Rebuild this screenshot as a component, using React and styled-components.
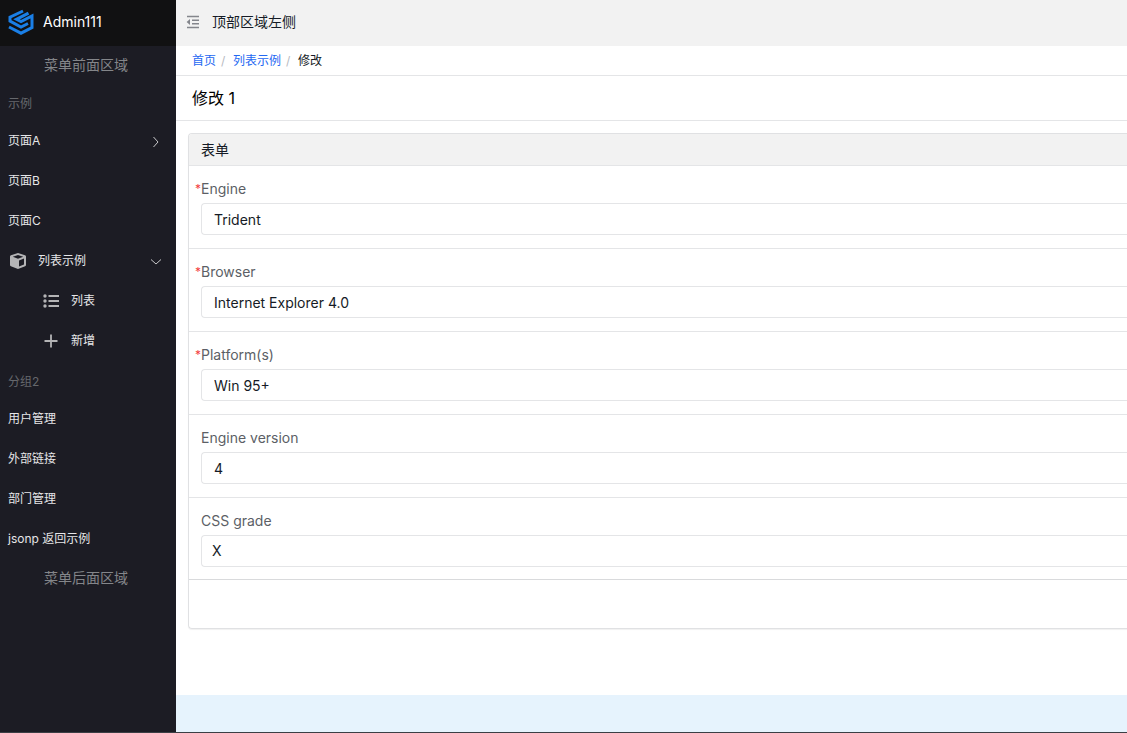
import React from "react";
import styled, { createGlobalStyle } from "styled-components";

const GlobalStyle = createGlobalStyle`
    * {
        box-sizing: border-box;
    }

    body {
        margin: 0;
        background: #fff;
        color: #151b26;
        font-family: Inter, "Noto Sans CJK SC", sans-serif;
        font-size: 14px;
        line-height: 20px;
    }

    a {
        text-decoration: none;
    }
`

const Layout = styled.div`
    display: flex;
    height: 100vh;
    overflow: hidden;
    border-bottom: 1px solid #3b3f45;
`

const Aside = styled.aside`
    flex: 0 0 176px;
    background: #1c1c24;
    color: #e6e6e8;
    font-size: 12px;
`

const Brand = styled.div`
    display: flex;
    align-items: center;
    gap: 9px;
    height: 46px;
    padding: 0 8px 2px;
    background: #111112;
    color: #fff;
    font-size: 14px;
`

const AsideSlot = styled.div`
    padding: 9px 0;
    padding-right: 4px;
    color: #84868a;
    font-size: 14px;
    text-align: center;
`

const GroupLabel = styled.div`
    padding: 10px 8px 7px;
    color: #66686d;
`

const MenuList = styled.ul`
    margin: 0;
    padding: 0;
    list-style: none;

    & + ${GroupLabel} {
        margin-top: 1px;
    }
`

const MenuLink = styled.a`
    display: flex;
    align-items: center;
    height: 40px;
    padding: 0 14px 0 ${props => props.$nested ? 42 : 8}px;
    color: #e6e6e8;

    > svg:first-child {
        margin-right: ${props => props.$nested ? 11 : 10}px;
    }
`

const MenuText = styled.span`
    flex: 1;
`

const Main = styled.main`
    display: flex;
    flex: 1;
    flex-direction: column;
    min-width: 0;
`

const TopBar = styled.header`
    display: flex;
    align-items: center;
    gap: 10px;
    height: 46px;
    padding: 0 16px 2px 8px;
    background: #f2f2f2;
`

const FoldButton = styled.button`
    display: flex;
    padding: 0;
    border: 0;
    background: none;
    color: #84868c;
`

const Breadcrumb = styled.nav`
    display: flex;
    gap: 5px;
    padding: 5px 16px 4px;
    border-bottom: 1px solid #e4e5e7;
    font-size: 12px;

    a {
        color: #2468f2;
    }
`

const Separator = styled.span`
    width: 7px;
    color: #b8babf;
`

const PageTitle = styled.h1`
    margin: 0;
    padding: 10px 16px;
    border-bottom: 1px solid #e4e5e7;
    color: #000;
    font-size: 16px;
    font-weight: 400;
    line-height: 24px;
`

const Content = styled.div`
    flex: 1;
    padding: 12px 0 12px 12px;
`

const Panel = styled.form`
    border: 1px solid #e0e1e3;
    border-right: 0;
    border-radius: 4px 0 0 4px;
    box-shadow: 0 1px 1px rgba(0, 0, 0, 0.06);
`

const PanelHeading = styled.h2`
    margin: 0;
    padding: 6px 12px 5px;
    border-bottom: 1px solid #e4e5e7;
    border-radius: 3px 0 0 0;
    background: #f2f2f2;
    font-size: 14px;
    font-weight: 400;
`

const FieldRow = styled.div`
    padding: 13px 0 13px 12px;

    & + & {
        border-top: 1px solid #e4e5e7;
    }

    &:nth-last-child(2) {
        padding-bottom: 12px;
    }
`

const Label = styled.label`
    position: relative;
    display: block;
    margin-bottom: 4px;
    color: #5c5f66;
`

const Star = styled.span`
    position: absolute;
    left: -6px;
    color: #f33e3e;
    font-size: 12px;
`

const Input = styled.input`
    display: block;
    width: 100%;
    height: 32px;
    padding: 0 12px;
    border: 1px solid #e4e5e7;
    border-right: 0;
    border-radius: 4px 0 0 4px;
    background: #fff;
    color: #151b26;
    font: inherit;
`

const Select = styled.select`
    display: block;
    width: 100%;
    height: 32px;
    padding: 0 10px;
    border: 1px solid #e4e5e7;
    border-right: 0;
    border-radius: 4px 0 0 4px;
    background: #fff;
    color: #151b26;
    font: inherit;
    appearance: none;
`

const PanelFooter = styled.div`
    height: 49px;
    border-top: 1px solid #d9dadc;
`

const BottomBar = styled.footer`
    height: 37px;
    background: #e6f3fd;
`

const Logo = () => (
    <svg width="26" height="26" viewBox="0 0 26 26" fill="none" stroke="#1a7fe6" strokeWidth="3" aria-hidden="true">
        <path d="M15 2 2 8.200v4L13 18l7-3.500" />
        <path d="M20.500 4.200 8.500 10.300 13 12.600l11-5.600v11.600l-11 5.600L1 18" />
    </svg>
)

const FoldIcon = () => (
    <svg width="18" height="18" viewBox="0 0 18 18" fill="none" stroke="currentColor" strokeWidth="1.6" aria-hidden="true">
        <path d="M3 3.5h12M8 7.2h7M8 10.8h7M3 14.5h12" />
        <path d="M6 6v6L2.6 9z" fill="currentColor" stroke="none" />
    </svg>
)

const CubeIcon = () => (
    <svg width="20" height="20" viewBox="0 0 20 20" fill="#b4b4b6" aria-hidden="true">
        <path fillRule="evenodd" d="M10 2 17 4.2Q18 4.6 18 5.6v8.4q0 .9-.9 1.3L10 18l-7.1-2.7Q2 14.9 2 14V5.6Q2 4.6 3 4.2zM10 3.9 4.8 5.7 10 7.7l5.2-2zM11 9.5v6l5-2V7.5z" />
    </svg>
)

const ListIcon = () => (
    <svg width="18" height="18" viewBox="0 0 18 18" fill="#b4b4b6" aria-hidden="true">
        <circle cx="3" cy="4" r="1.7" />
        <circle cx="3" cy="9" r="1.7" />
        <circle cx="3" cy="14" r="1.7" />
        <path d="M6.5 3H17v2H6.5zM6.5 8H17v2H6.5zM6.5 13H17v2H6.5z" />
    </svg>
)

const PlusIcon = () => (
    <svg width="18" height="18" viewBox="0 0 18 18" stroke="#b4b4b6" strokeWidth="1.8" aria-hidden="true">
        <path d="M9 2.5v13M2.5 9h13" />
    </svg>
)

const Arrow = ({ open }) => (
    <svg width="12" height="12" viewBox="0 0 12 12" fill="none" stroke="#c8c8ca" aria-hidden="true">
        <path d={open ? "M1 4.5 6 9l5-4.5" : "M3.5 2 8 7l-4.5 5"} />
    </svg>
)

const MenuItem = ({ label, icon, nested, arrow }) => (
    <li>
        <MenuLink href="#" $nested={nested}>
            {icon}
            <MenuText>{label}</MenuText>
            {arrow && <Arrow open={arrow === "open"} />}
        </MenuLink>
    </li>
)

const menu = [
    {
        label: "示例",
        items: [
            { label: "页面A", arrow: "closed" },
            { label: "页面B" },
            { label: "页面C" },
            { label: "列表示例", icon: <CubeIcon />, arrow: "open" },
            { label: "列表", icon: <ListIcon />, nested: true },
            { label: "新增", icon: <PlusIcon />, nested: true },
        ],
    },
    {
        label: "分组2",
        items: [
            { label: "用户管理" },
            { label: "外部链接" },
            { label: "部门管理" },
            { label: "jsonp 返回示例" },
        ],
    },
];

const fields = [
    { name: "engine", label: "Engine", value: "Trident", required: true },
    { name: "browser", label: "Browser", value: "Internet Explorer 4.0", required: true },
    { name: "platform", label: "Platform(s)", value: "Win 95+", required: true },
    { name: "version", label: "Engine version", value: "4" },
    { name: "grade", label: "CSS grade", value: "X", options: ["A", "B", "C", "D", "X"] },
];

const Field = ({ field }) => (
    <FieldRow>
        <Label htmlFor={field.name}>
            {field.required && <Star>*</Star>}
            {field.label}
        </Label>
        {field.options ? (
            <Select id={field.name} defaultValue={field.value}>
                {field.options.map(option => <option key={option}>{option}</option>)}
            </Select>
        ) : (
            <Input id={field.name} type="text" defaultValue={field.value} />
        )}
    </FieldRow>
)

const App = () => (
    <>
        <GlobalStyle />
        <Layout>
            <Aside>
                <Brand>
                    <Logo />
                    <span>Admin111</span>
                </Brand>
                <AsideSlot>菜单前面区域</AsideSlot>
                {
                    menu.map(group => (
                        <React.Fragment key={group.label}>
                            <GroupLabel>{group.label}</GroupLabel>
                            <MenuList>
                                {group.items.map(item => <MenuItem key={item.label} {...item} />)}
                            </MenuList>
                        </React.Fragment>
                    ))
                }
                <AsideSlot>菜单后面区域</AsideSlot>
            </Aside>
            <Main>
                <TopBar>
                    <FoldButton type="button" aria-label="收起菜单">
                        <FoldIcon />
                    </FoldButton>
                    <span>顶部区域左侧</span>
                </TopBar>
                <Breadcrumb>
                    <a href="#">首页</a>
                    <Separator>/</Separator>
                    <a href="#">列表示例</a>
                    <Separator>/</Separator>
                    <span>修改</span>
                </Breadcrumb>
                <PageTitle>修改 1</PageTitle>
                <Content>
                    <Panel>
                        <PanelHeading>表单</PanelHeading>
                        {fields.map(field => <Field key={field.name} field={field} />)}
                        <PanelFooter />
                    </Panel>
                </Content>
                <BottomBar />
            </Main>
        </Layout>
    </>
)

export default App;
